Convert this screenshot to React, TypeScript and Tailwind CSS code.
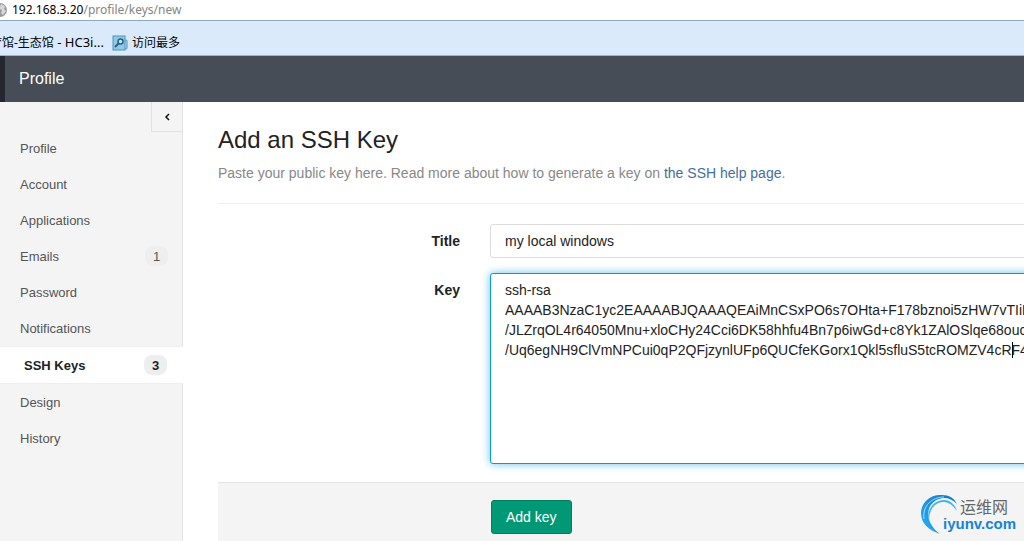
import clsx from "clsx";

interface NavItem {
  label: string;
  href: string;
  count?: number;
  active?: boolean;
}

const navItems: NavItem[] = [
  { label: "Profile", href: "#profile" },
  { label: "Account", href: "#account" },
  { label: "Applications", href: "#applications" },
  { label: "Emails", href: "#emails", count: 1 },
  { label: "Password", href: "#password" },
  { label: "Notifications", href: "#notifications" },
  { label: "SSH Keys", href: "#keys", count: 3, active: true },
  { label: "Design", href: "#design" },
  { label: "History", href: "#history" },
];

const publicKey = [
  "ssh-rsa",
  "AAAAB3NzaC1yc2EAAAABJQAAAQEAiMnCSxPO6s7OHta+F178bznoi5zHW7vTIiLU",
  "/JLZrqOL4r64050Mnu+xloCHy24Cci6DK58hhfu4Bn7p6iwGd+c8Yk1ZAlOSlqe68ouc",
  "/Uq6egNH9ClVmNPCui0qP2QFjzynlUFp6QUCfeKGorx1Qkl5sfluS5tcROMZV4cRF4T",
].join("\n");

const BrowserBar = () => (
  <div className="font-['Noto_Sans','Noto_Sans_CJK_SC',sans-serif] text-xs text-black">
    <div className="flex h-5 items-center overflow-hidden bg-white whitespace-nowrap">
      <svg className="-ml-2 mr-1 h-4 w-4 shrink-0" viewBox="0 0 16 16" aria-hidden="true">
        <circle cx="8" cy="8" r="7" fill="#9a9a9a" />
        <path d="M9 2l4 2-1 3 2 2-3 4-2-2 1-3-3-1zM3 4l3 1-1 3 1 4-3-3z" fill="#d6d6d6" />
      </svg>
      <span>
        192.168.3.20<span className="text-[#858585]">/profile/keys/new</span>
      </span>
    </div>
    <div className="flex h-9 items-center overflow-hidden border-t border-b border-t-[#8fa8c0] border-b-[#9fb3c8] bg-[#dbeafa] pt-2.5 whitespace-nowrap">
      <a href="#hc3i" className="-ml-2.5">
        疗馆-生态馆<span className="text-[13px]"> - HC3i...</span>
      </a>
      <svg className="mr-1 ml-2 h-4 w-4 shrink-0" viewBox="0 0 16 16" aria-hidden="true">
        <rect x="10" y="5" width="5" height="9" rx="1" fill="#b9def0" stroke="#4f92b5" />
        <rect x="1" y="1" width="12" height="14" fill="#8fc9e5" stroke="#4f94b8" />
        <circle cx="8.500" cy="6.500" r="2.500" fill="#c4e6f5" stroke="#2e5f86" strokeWidth="1.500" />
        <path d="M6.500 8.500L3 12" stroke="#2e5f86" strokeWidth="2" />
      </svg>
      <a href="#most-visited">访问最多</a>
    </div>
  </div>
);

const Sidebar = () => (
  <aside className="relative w-[183px] shrink-0 border-r border-[#e1e1e1] bg-[#f4f4f4] pt-7">
    <button
      type="button"
      aria-label="Collapse sidebar"
      className="absolute top-0 right-0 flex h-[30px] w-[31px] items-center justify-center border-b border-l border-[#e1e1e1]"
    >
      <svg className="h-2 w-2" viewBox="0 0 8 8" fill="none" aria-hidden="true">
        <path d="M6 1L3 4l3 3" stroke="#111" strokeWidth="1.500" />
      </svg>
    </button>
    <nav className="text-[13px]">
      {navItems.map((item) => (
        <a
          key={item.label}
          href={item.href}
          className={clsx(
            "flex items-center justify-between",
            item.active
              ? "-mr-px h-[38px] border-y border-[#eee] bg-white pr-4 pl-6 font-bold text-[#222]"
              : "h-9 pr-3.5 pl-5 text-[#555]"
          )}
        >
          <span className="pt-0.5">{item.label}</span>
          {item.count && (
            <span className="flex h-5 w-[23px] items-center justify-center rounded-lg bg-[#eee] pt-0.5">
              {item.count}
            </span>
          )}
        </a>
      ))}
    </nav>
  </aside>
);

const SiteLogo = () => (
  <div className="absolute right-1 bottom-1 h-11 w-[100px]" aria-hidden="true">
    <svg className="h-full w-full" viewBox="0 0 100 44">
      <defs>
        <linearGradient id="ring" x1="0" y1="1" x2="1" y2="0">
          <stop offset="0" stopColor="#2bb0f2" />
          <stop offset="1" stopColor="#1272cc" />
        </linearGradient>
      </defs>
      <path d="M20 41C8 37 1 30 1 20C1 9 11 1 22 2C29 2 34 5 37 11C31 5 25 4 19 6C5 11 4 29 20 41Z" fill="url(#ring)" />
      <path d="M4 26C2 13 12 4 24 4" fill="none" stroke="#a5dcf8" strokeWidth="1" />
      <path d="M9 28C6 18 13 7 24 7C31 7 35 12 37 18C32 11 28 9 23 9C14 10 9 17 9 28Z" fill="#43b6ef" />
      <text x="40" y="20" fontSize="16" fill="#666" fontFamily="Noto Sans CJK SC, sans-serif">运维网</text>
      <text x="23" y="36" fontSize="15" fontWeight="bold" fill="#1683d8" fontFamily="Liberation Sans, sans-serif">iyunv.com</text>
    </svg>
  </div>
);

const KeyForm = () => (
  <form className="flex flex-1 flex-col text-sm leading-5" onSubmit={(e) => e.preventDefault()}>
    <div className="mb-[15px] flex gap-[30px]">
      <label htmlFor="key-title" className="w-[242px] shrink-0 pt-[7px] text-right font-bold">
        Title
      </label>
      <input
        id="key-title"
        type="text"
        defaultValue="my local windows"
        className="-mr-8 h-[34px] min-w-0 flex-1 rounded-[3px] border border-[#ddd] bg-white px-3.5 outline-none"
      />
    </div>
    <div className="mb-[18px] flex gap-[30px]">
      <label htmlFor="key-body" className="w-[242px] shrink-0 pt-[7px] text-right font-bold">
        Key
      </label>
      <div className="relative -mr-8 min-w-0 flex-1">
        <textarea
          id="key-body"
          wrap="off"
          spellCheck={false}
          defaultValue={publicKey}
          className="block h-[191px] w-full resize-none overflow-hidden rounded-[3px] border border-[#019cdc] bg-white px-3.5 py-1.5 shadow-[0_0_8px_rgba(1,156,220,0.6)] outline-none"
        />
        {/* text caret */}
        <span className="absolute top-[69px] left-[522px] h-4 w-px bg-black" />
      </div>
    </div>
    <div className="relative flex-1 border-t border-[#e5e5e5] bg-[#f4f4f4] pt-[17px] pb-[7px] pl-[273px]">
      <button type="submit" className="h-[34px] rounded-[3px] border border-[#00805f] bg-[#019875] px-3.5 text-white">
        Add key
      </button>
      <SiteLogo />
    </div>
  </form>
);

export default function App() {
  return (
    <div className="flex min-h-screen flex-col overflow-hidden bg-white font-['Liberation_Sans',Arial,sans-serif] text-[#222]">
      <BrowserBar />
      <header className="flex h-[46px] items-center border-l-[5px] border-[#24272f] bg-[#474d57] pl-3.5 text-base text-white">
        Profile
      </header>
      <div className="flex flex-1">
        <Sidebar />
        <main className="flex min-w-0 flex-1 flex-col pt-[22px] pl-[35px]">
          <h1 className="text-2xl">Add an SSH Key</h1>
          <p className="mt-[7px] text-sm leading-5 text-[#888]">
            Paste your public key here. Read more about how to generate a key on{" "}
            <a href="#help" className="text-[#446e9b]">the SSH help page</a>.
          </p>
          <hr className="my-5 border-[#eee]" />
          <KeyForm />
        </main>
      </div>
    </div>
  );
}
